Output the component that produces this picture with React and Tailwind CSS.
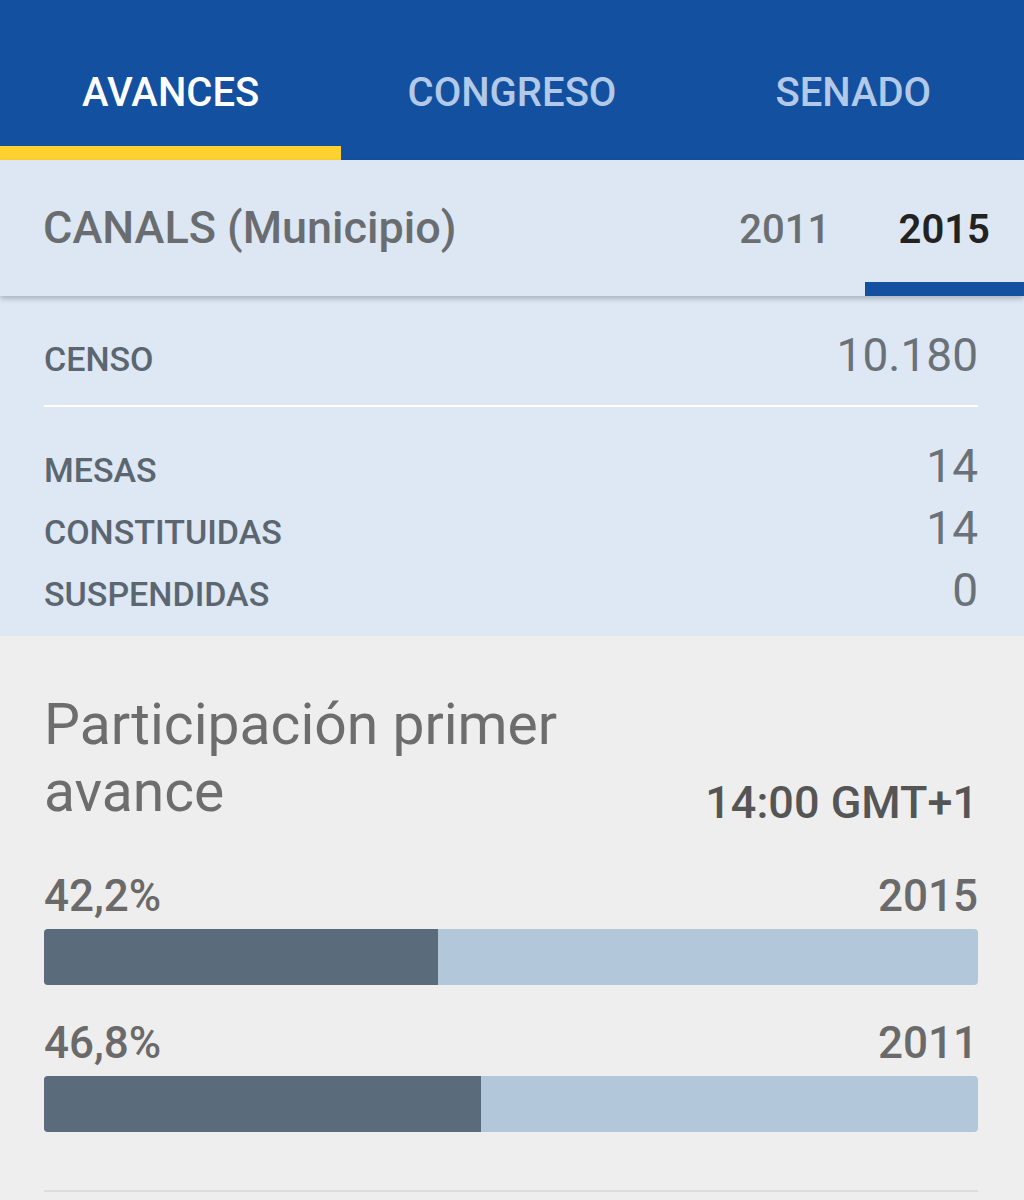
import React from "react";

const font = { fontFamily: "Roboto, 'Noto Sans', Arial, sans-serif" };

function Stat({ label, value, className = "" }) {
  return (
    <div className={`flex items-baseline justify-between ${className}`}>
      <span className="text-[34px] font-medium leading-none text-[#5b6670]">{label}</span>
      <span className="text-[46px] font-normal leading-none text-[#6a7178]">{value}</span>
    </div>
  );
}

function Bar({ pct, label, year, className = "" }) {
  return (
    <div className={className}>
      <div className="flex items-baseline justify-between text-[44px] font-medium leading-none text-[#6a6a6a]">
        <span>{label}</span>
        <span>{year}</span>
      </div>
      <div className="mt-[11px] flex h-[56px] overflow-hidden rounded-[4px] bg-[#b2c8da]">
        <div className="h-full bg-[#5a6b7b]" style={{ width: `${pct}%` }} />
      </div>
    </div>
  );
}

export default function App() {
  return (
    <div style={font} className="w-[1024px] h-[1200px] overflow-hidden bg-[#eeeeee]">
      {/* Top tabs */}
      <div className="flex h-[160px] bg-[#1450a0]">
        {[
          ["AVANCES", true],
          ["CONGRESO", false],
          ["SENADO", false],
        ].map(([t, active]) => (
          <div key={t} className="flex flex-1 flex-col">
            <div
              className={`flex-1 pt-[73px] text-center text-[40px] font-medium leading-none ${
                active ? "text-white" : "text-[#b3c9e8]"
              }`}
            >
              {t}
            </div>
            <div className={`h-[14px] ${active ? "bg-[#fdd130]" : ""}`} />
          </div>
        ))}
      </div>

      {/* Municipality bar */}
      <div className="relative z-10 flex h-[136px] bg-[#dce7f3] shadow-[0_3px_5px_rgba(0,0,0,0.22)]">
        <div className="flex-1 pl-[43px] pt-[45px] text-[45px] font-medium leading-none text-[#6a6d70]">
          CANALS (Municipio)
        </div>
        <div className="flex">
          {[
            ["2011", false],
            ["2015", true],
          ].map(([y, active]) => (
            <div key={y} className="flex w-[159.5px] flex-col">
              <div
                className={`flex-1 pt-[50px] text-center text-[40px] leading-none ${
                  active ? "font-semibold text-[#222222]" : "font-medium text-[#6c6f72]"
                }`}
              >
                {y}
              </div>
              <div className={`h-[14px] ${active ? "bg-[#1450a0]" : ""}`} />
            </div>
          ))}
        </div>
      </div>

      {/* Stats */}
      <div className="bg-[#dde8f4] pl-[44px] pr-[46px] pb-[23px] pt-[36px]">
        <Stat label="CENSO" value="10.180" />
        <div className="mt-[27px] h-[2px] bg-white" />
        <Stat label="MESAS" value="14" className="mt-[36px]" />
        <Stat label="CONSTITUIDAS" value="14" className="mt-[16px]" />
        <Stat label="SUSPENDIDAS" value="0" className="mt-[16px]" />
      </div>

      {/* Participation */}
      <div className="pl-[44px] pr-[46px] pt-[55px]">
        <div className="flex items-end justify-between">
          <div className="w-[560px] text-[57px] font-normal leading-[67px] text-[#6d6d6d]">
            Participación primer avance
          </div>
          <div className="text-[45px] font-medium leading-none text-[#555555]">14:00 GMT+1</div>
        </div>
        <Bar pct={42.2} label="42,2%" year="2015" className="mt-[49px]" />
        <Bar pct={46.8} label="46,8%" year="2011" className="mt-[36px]" />
        <div className="mt-[58px] h-[2px] bg-[#dddddd]" />
      </div>
    </div>
  );
}
